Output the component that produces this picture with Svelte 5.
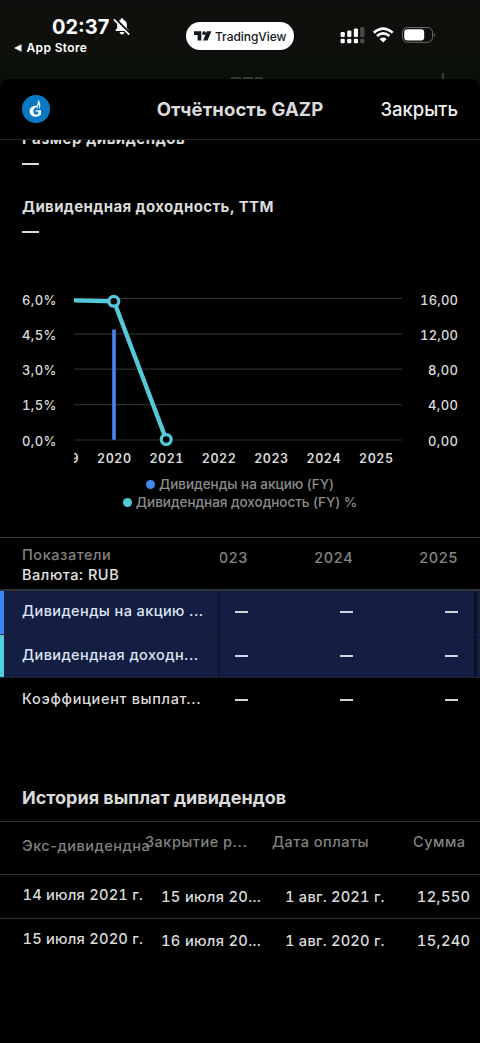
<script>
  const years = ['2020', '2021', '2022', '2023', '2024', '2025'];
  const left = ['6,0%', '4,5%', '3,0%', '1,5%', '0,0%'];
  const right = ['16,00', '12,00', '8,00', '4,00', '0,00'];
  const metrics = [
    { name: 'Дивиденды на акцию ...', color: '#3f87f5', selected: true },
    { name: 'Дивидендная доходн...', color: '#4fd0dc', selected: true },
    { name: 'Коэффициент выплат...', color: 'transparent', selected: false }
  ];
  const payments = [
    ['14 июля 2021 г.', '15 июля 20...', '1 авг. 2021 г.', '12,550'],
    ['15 июля 2020 г.', '16 июля 20...', '1 авг. 2020 г.', '15,240']
  ];
</script>

<div class="screen">
  <header class="status">
    <div class="clock">
      <div class="time"><span>02:37</span>
        <svg width="18" height="18" viewBox="0 0 18 18">
          <path d="M2.600 13V11.800L4.200 10V6.600C4.200 4 5.900 2.200 7.500 1.900C7.600.9 8.100.3 9 .3s1.400.6 1.500 1.600C12.200 2.300 13.800 4 13.800 6.600V10l1.700 1.800V13zM6.600 14h4.800c-.2 1.600-1.100 2.500-2.400 2.500S6.800 15.600 6.600 14z" fill="#fff" />
          <path d="M1.800.8L17.200 16" stroke="#0e100c" stroke-width="3" />
          <path d="M.8 1.400L16.300 16.600" stroke="#fff" stroke-width="1.500" />
        </svg>
      </div>
      <div class="back"><svg width="8" height="8" viewBox="0 0 8 8"><path d="M0 4L7.500.3v7.400z" fill="#fff" /></svg><span>App Store</span></div>
    </div>
    <div class="pill">
      <svg width="18" height="10" viewBox="0 0 18 10"><path d="M0 .3h7.300v9.300H3.600V4H0zM12.900.3h4.500l-3.900 9.300H9.100z" fill="#131722" /><circle cx="10.200" cy="2.200" r="1.900" fill="#131722" /></svg>
      <span>TradingView</span>
    </div>
    <svg class="sys" width="98" height="20" viewBox="0 0 98 20">
      <g fill="#fff">
        <rect x=".6" y="7" width="4.200" height="5" rx="1.200" /><rect x="7.200" y="5.500" width="4.200" height="6.500" rx="1.200" /><rect x="13.800" y="3.500" width="4.200" height="8.500" rx="1.200" />
        <rect x=".6" y="13.700" width="4.200" height="4.600" rx="1.200" /><rect x="7.200" y="13.700" width="4.200" height="4.600" rx="1.200" /><rect x="13.800" y="13.700" width="4.200" height="4.600" rx="1.200" />
        <g opacity=".25"><rect x="20.200" y="2" width="4.200" height="10" rx="1.200" /><rect x="20.200" y="13.700" width="4.200" height="4.600" rx="1.200" /></g>
        <path d="M39.700 13.900Q43.200 11.100 46.700 13.900L43.200 17.500z" />
      </g>
      <g fill="none" stroke="#fff" stroke-width="2.700"><path d="M33.800 7.800Q43.200-.5 52.600 7.800" /><path d="M37 11.100Q43.200 5.700 49.400 11.100" /></g>
      <rect x="62.500" y="2.500" width="30" height="14.800" rx="4.800" fill="none" stroke="#686a67" />
      <rect x="64.200" y="4.300" width="20" height="11.200" rx="3.200" fill="#fff" />
      <path d="M93.900 7.800q2.200 2.200 0 4.400z" fill="#686a67" />
    </svg>
  </header>

  <div class="peek"><span></span><i></i></div>

  <main>
    <div class="head">
      <svg width="28" height="28" viewBox="0 0 28 28">
        <circle cx="14" cy="14" r="14" fill="#0a79c5" />
        <path d="M15.300 10.900C11 10.300 7.600 12.800 7.600 16.200C7.700 19.600 10.200 21.700 13.300 21.700C15.300 21.700 17.300 21 19 19.700V15.300H13.600V16.600H16.300V19C13.600 20.600 11.200 19 11.400 16C11.600 13.600 13.200 12 15.500 11.800z" fill="#fff" />
        <path d="M15.300 13.800C13.700 9.800 16.300 8.400 16.300 4.400C18 6.800 19 10.400 17.700 13.800H17C17.500 11.400 17 10 16.400 9.400C15.700 10.400 15.400 12 15.900 13.800z" fill="#fff" />
      </svg>
      <h1>Отчётность GAZP</h1>
      <button>Закрыть</button>
    </div>

    <section class="facts">
      <h2 class="first">Размер дивидендов</h2><b></b>
      <h2>Дивидендная доходность, TTM</h2><b></b>
    </section>

    <section class="chart">
      <svg width="480" height="190" viewBox="0 280 480 190">
        {#each left as label, i}
          <path d="M74 {298.400 + i * 35.400}H402" stroke="#2c2c2c" stroke-width="1.200" />
          <text class="axis" x="22" y={304.700 + i * 35.200} textLength="34.500">{label}</text>
          <text class="axis" x="458" y={304.700 + i * 35.200} text-anchor="end" textLength={i < 2 ? 38 : 30}>{right[i]}</text>
        {/each}
        <clipPath id="plot"><rect x="74" y="280" width="328" height="190" /></clipPath>
        <g clip-path="url(#plot)">
          <path d="M114 439.800V329.500" stroke="#4685ef" stroke-width="3.600" />
          <path d="M60 300L114 301.300L166.200 439.500" fill="none" stroke="#54c9da" stroke-width="4.400" />
          <text class="year" x="61.500" y="462.600" text-anchor="middle" textLength="34">2019</text>
          {#each years as year, i}
            <text class="year" x={114 + i * 52.400} y="462.600" text-anchor="middle" textLength="34">{year}</text>
          {/each}
        </g>
        <g fill="#000" stroke="#54c9da" stroke-width="3.300"><circle cx="113.800" cy="301.300" r="4.900" /><circle cx="166.200" cy="439.500" r="4.900" /></g>
      </svg>
      <div class="legend">
        <div><i class="blue"></i><span>Дивиденды на акцию (FY)</span></div>
        <div><i class="cyan"></i><span>Дивидендная доходность (FY) %</span></div>
      </div>
    </section>

    <section class="metrics">
      <div class="mhead">
        <div class="names"><span class="dim">Показатели</span><span class="cur">Валюта: RUB</span></div>
        <div class="ycell cut"><span>2023</span></div><div class="ycell">2024</div><div class="ycell">2025</div>
      </div>
      {#each metrics as m}
        <div class="mrow" class:selected={m.selected}>
          <div class="tag" style:background={m.color}></div>
          <div class="mname">{m.name}</div>
          <div class="dash"><i></i></div><div class="dash"><i></i></div><div class="dash"><i></i></div>
          <div class="edge"></div>
        </div>
      {/each}
    </section>

    <section class="history">
      <h3>История выплат дивидендов</h3>
      <div class="hrow hhead"><span>Экс-дивидендна</span><span>Закрытие р...</span><span>Дата оплаты</span><span>Сумма</span></div>
      {#each payments as p}
        <div class="hrow">{#each p as cell}<span>{cell}</span>{/each}</div>
      {/each}
    </section>
  </main>
</div>

<style>
  :global(body) { margin: 0; background: #000; }
  .screen { width: 480px; height: 1043px; overflow: hidden; background: linear-gradient(#0f100d, #0b0f0a 79px, #090c08 100px); font-family: Inter, sans-serif; color: #dbdbdb; display: flex; flex-direction: column; box-sizing: border-box; }
  .status { height: 72px; flex: none; display: grid; grid-template-columns: 186px 108px 1fr; color: #fff; }
  .clock { padding-top: 15px; }
  .time { display: flex; align-items: center; padding-left: 52px; height: 24px; gap: 4px; font-size: 20px; font-weight: 700; letter-spacing: 0; }
  .time span { width: 57px; white-space: nowrap; }
  .back { display: flex; align-items: center; gap: 5px; height: 18px; padding-left: 13.500px; font-size: 12px; font-weight: 600; letter-spacing: .35px; }
  .back svg { margin-top: -1px; }
  .back span { margin-top: -1px; }
  .pill { margin-top: 22px; height: 28px; border-radius: 14px; background: #fff; color: #131722; display: flex; align-items: center; padding-left: 8px; gap: 3px; font-size: 12px; font-weight: 500; letter-spacing: -.05px; box-sizing: border-box; }
  .sys { margin: 25px 0 0 46px; }
  .peek { height: 7px; flex: none; display: flex; justify-content: space-between; align-items: end; padding: 0 36px 0 231px; }
  .peek span { width: 32px; height: 2px; background: repeating-linear-gradient(90deg, #353733 0 10px, transparent 10px 12px); }
  .peek i { width: 2px; height: 6px; background: #3b3d3a; }
  main { flex: 1; background: #000; border-radius: 10px 10px 0 0; overflow: hidden; }
  .head { height: 61px; box-sizing: border-box; border-bottom: 1px solid #222; display: grid; align-items: center; padding: 0 22px; grid-template-columns: 98px 240px 98px; }
  h1 { font-size: 18.500px; font-weight: 700; margin: 0; text-align: center; white-space: nowrap; letter-spacing: .1px; }
  button { background: none; border: 0; padding: 0; color: #eee; font: 500 18.500px Inter, sans-serif; white-space: nowrap; display: flex; justify-content: flex-end; }
  .facts { height: 140px; overflow: hidden; padding-left: 22px; }
  h2 { font-size: 15px; line-height: 20px; font-weight: 700; margin: -11px 0 0; letter-spacing: .38px; white-space: nowrap; }
  h2.first { letter-spacing: .57px; }
  .facts b { display: block; width: 17px; height: 2px; background: #dbdbdb; margin: 14px 0 32px; }
  .facts b + h2 { margin-top: 0; }
  .chart svg { display: block; }
  .axis { font: 500 13px Inter, sans-serif; fill: #dbdbdb; font-feature-settings: "tnum"; }
  .year { font: 600 12.500px Inter, sans-serif; fill: #dbdbdb; font-feature-settings: "tnum"; }
  .legend { height: 67px; padding-top: 5px; box-sizing: border-box; font-size: 13.500px; color: #8c8c8c; font-weight: 500; line-height: 18px; letter-spacing: -.04px; }
  .legend div { display: flex; justify-content: center; align-items: center; gap: 4px; height: 18px; }
  .legend i { width: 9px; height: 9px; border-radius: 50%; }
  .blue { background: #4685ef; } .cyan { background: #4fc9d8; }
  .mhead { height: 54px; box-sizing: border-box; border-top: 1px solid #363636; border-bottom: 2px solid #303236; display: grid; grid-template-columns: 220px 28px 105px 105px; font-size: 14.500px; letter-spacing: .55px; font-weight: 500; font-feature-settings: "tnum"; }
  .names { padding: 7px 0 0 22px; display: flex; flex-direction: column; line-height: 20px; }
  .dim { color: #828282; } .cur { color: #e2e2e2; }
  .ycell { padding-top: 11px; text-align: right; color: #858585; line-height: 18px; letter-spacing: .35px; }
  .cut { overflow: hidden; display: flex; justify-content: flex-end; }
  .mrow { height: 43.700px; display: grid; grid-template-columns: 4px 216px 28px 105px 105px 16px 6px; align-items: center; box-sizing: border-box; }
  .selected { background: #131e42; border-bottom: 1px solid #1b2132; }
  .tag { height: 100%; }
  .mname { padding-left: 18px; font-size: 14.500px; font-weight: 500; letter-spacing: .65px; white-space: nowrap; height: 100%; box-sizing: border-box; line-height: 41px; }
  .selected .mname { border-right: 2px solid #0d1534; color: #dfe5f5; letter-spacing: .4px; line-height: 39px; }
  .dash { display: flex; justify-content: flex-end; }
  .dash i { width: 13px; height: 2px; background: #d0d4dc; margin-top: -1px; }
  .edge { grid-column: 7; height: 100%; }
  .selected .edge { border-left: 3px solid #091127; }
  .history { padding-top: 64px; }
  h3 { margin: 0; height: 35px; line-height: 24px; font-size: 18px; font-weight: 700; padding-left: 22px; white-space: nowrap; }
  .hrow { height: 43.700px; box-sizing: border-box; border-top: 1.500px solid #303030; display: grid; grid-template-columns: 161px 124px 99px 1fr; font-size: 14.700px; font-weight: 500; letter-spacing: .2px; line-height: 40px; white-space: nowrap; font-feature-settings: "tnum"; }
  .hrow span { padding-top: 2px; }
  .hrow span:first-child { padding: 0 0 0 22.500px; line-height: 41px; }
  .hrow span:nth-child(2) { letter-spacing: .3px; }
  .hrow span:last-child { text-align: right; padding-right: 9.500px; letter-spacing: .35px; }
  .hrow.hhead { height: 53px; color: #828282; grid-template-columns: 145px 127px 97px 1fr; font-size: 14.500px; font-feature-settings: normal; letter-spacing: .5px; }
  .hrow.hhead span { padding-top: 0; letter-spacing: .5px; }
  .hrow.hhead span:first-child { padding: 4px 0 0 22px; line-height: 39px; }
  .hrow.hhead span:last-child { padding-right: 14.500px; }
</style>
